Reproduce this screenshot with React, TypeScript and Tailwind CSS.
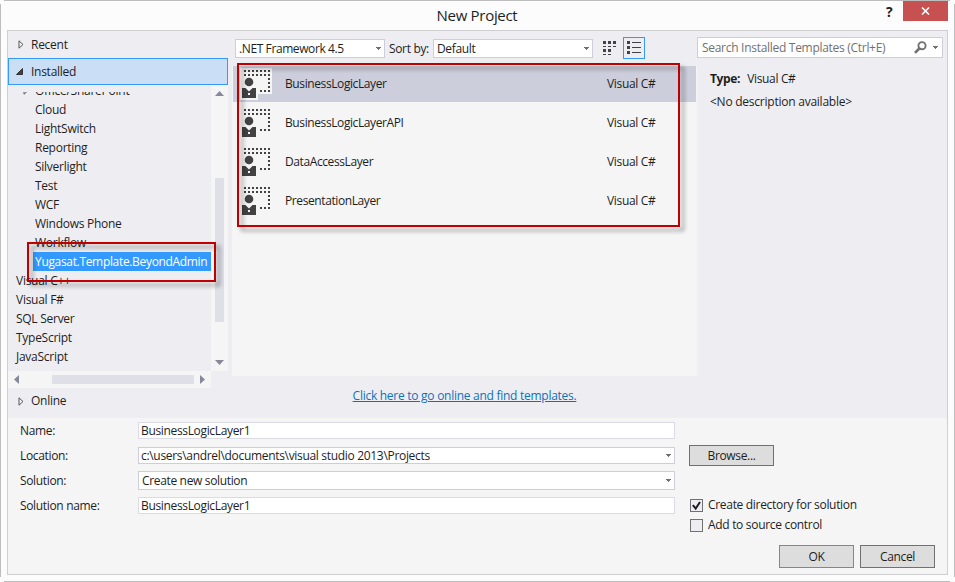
import React from "react";

const treeItems = ["Cloud", "LightSwitch", "Reporting", "Silverlight", "Test", "WCF", "Windows Phone", "Workflow"];
const languages = ["Visual C++", "Visual F#", "SQL Server", "TypeScript", "JavaScript"];
const templates = ["BusinessLogicLayer", "BusinessLogicLayerAPI", "DataAccessLayer", "PresentationLayer"];

function Caret({ className = "" }: { className?: string }) {
  return (
    <svg width="6" height="3" viewBox="0 0 6 3" className={className} shapeRendering="crispEdges">
      <path d="M0 0h6L3 3z" fill="#717171" />
    </svg>
  );
}

function Collapsed() {
  return (
    <svg width="6" height="9" viewBox="0 0 6 9">
      <path d="M1 .8v7.4L5 4.5z" fill="#f4f4f4" stroke="#555" strokeWidth="1" />
    </svg>
  );
}

function Select({ value, className = "" }: { value: string; className?: string }) {
  return (
    <div className={`flex items-center justify-between border border-[#cccedb] bg-white pr-[3px] ${className}`}>
      <span>{value}</span>
      <Caret />
    </div>
  );
}

const dots = [
  ...[0, 4].flatMap((y) => [2, 6, 10, 14, 18, 22, 26].map((x) => [x, y])),
  [26, 8], [26, 12], [26, 16], [26, 20], [22, 20], [18, 20],
];

function TemplateIcon({ selected }: { selected: boolean }) {
  return (
    <svg width="32" height="32" viewBox="-2 -2 32 32" shapeRendering="crispEdges">
      {selected && <path d="M-2-2H30V24H16V30H-2z" fill="#f5f5f5" />}
      {dots.map(([x, y]) => (
        <rect key={`${x}-${y}`} x={x} y={y} width="2" height="2" fill="#424242" />
      ))}
      <circle cx="7" cy="12" r="5.6" fill="#f5f5f5" />
      <circle cx="7" cy="12" r="4.3" fill="#424242" shapeRendering="auto" />
      <path d="M0 18h3.5L7 21.5 10.500 18H14v10H0z" fill="#424242" shapeRendering="auto" />
      <rect x="6" y="23" width="2" height="2" fill="#f5f5f5" />
    </svg>
  );
}

function Field({ label, children }: { label: string; children: React.ReactNode }) {
  return (
    <div className="flex h-[25px] items-center">
      <span className="w-[118px]">{label}</span>
      {children}
    </div>
  );
}

function Check({ label, checked }: { label: string; checked: boolean }) {
  return (
    <div className="flex h-5 items-center">
      <span className="mr-[5px] flex h-[13px] w-[13px] items-center justify-center border border-[#717171] bg-[#eeeef2]">
        {checked && (
          <svg width="11" height="11" viewBox="0 0 11 11">
            <path d="M1.800 5.200L4.700 8.500 9 2" fill="none" stroke="#1e1e1e" strokeWidth="2" />
          </svg>
        )}
      </span>
      <span className="tracking-[-0.31px]">{label}</span>
    </div>
  );
}

export default function App() {
  return (
    <div className="relative flex h-[582px] w-[955px] flex-col overflow-hidden bg-[#fcfcfc] font-['Open_Sans','Noto_Sans',sans-serif] text-[12px] leading-[18px] tracking-[-0.34px] whitespace-nowrap text-[#1e1e1e]">
      <div className="absolute top-0 left-1 h-px w-[946px] bg-[#bdbdbd]" />
      <div className="absolute bottom-0 left-1 h-px w-[946px] bg-[#bdbdbd]" />
      <div className="absolute top-1 left-0 h-[573px] w-px bg-[#bdbdbd]" />
      <div className="absolute top-1 right-0 h-[573px] w-px bg-[#bdbdbd]" />

      <header className="flex h-[30px] shrink-0 items-start pt-px pl-[7px]">
        <h1 className="w-[872px] pt-[3px] pl-[68px] text-center text-[15px] leading-[22px] tracking-[-0.3px]">New Project</h1>
        <span className="w-6 pl-[7px] text-[14px] leading-[22px] font-bold">?</span>
        <button className="flex h-5 w-[45px] items-center justify-center bg-[#c75050]">
          <svg width="9" height="8" viewBox="0 0 9 8"><path d="M1 .5l7 7M8 .5l-7 7" stroke="#fff" strokeWidth="1.600" /></svg>
        </button>
      </header>

      <main className="ml-[7px] flex h-[545px] w-[941px] flex-col border border-[#cfcfd1] bg-[#f5f5f5]">
        <section className="flex h-[387px] shrink-0 bg-[#eeeef2]">
          <nav className="flex w-[220px] flex-col tracking-[-0.27px]">
            <div className="flex h-[27px] items-center gap-[7px] pl-[10px]"><Collapsed /><span>Recent</span></div>
            <div className="flex h-[27px] shrink-0 items-center border border-[#3399ff] bg-[#cadef5] pl-[7px]">
              <svg width="7" height="7" viewBox="0 0 7 7" className="mr-2"><path d="M6.500 .5v6H.5z" fill="#424242" stroke="#1e1e1e" strokeWidth=".8" /></svg>
              <span>Installed</span>
            </div>
            <div className="flex h-[286px] shrink-0">
              <div className="w-[203px] pt-[7px]">
                <div className="h-[279px] overflow-hidden">
                  <div className="-mt-[11px]">
                    <div className="flex h-[19px] items-center gap-[5px] pl-[15px]"><Collapsed /><span className="ml-px tracking-[-0.25px]">Office/SharePoint</span></div>
                    {treeItems.map((t) => <div key={t} className="flex h-[19px] items-center pl-[27px]">{t}</div>)}
                    <div className="ml-[25px] flex h-[19px] items-center bg-[#3399ff] pl-[2px] tracking-[-0.33px] text-white">Yugasat.Template.BeyondAdmin</div>
                    {languages.map((t) => <div key={t} className="flex h-[19px] items-center pl-2">{t}</div>)}
                  </div>
                </div>
              </div>
              <div className="flex w-[17px] flex-col items-center bg-[#f5f5f5] pt-[6px] pb-[6px]">
                <svg width="9" height="5" viewBox="0 0 9 5"><path d="M0 5h9L4.500 0z" fill="#868999" /></svg>
                <div className="mt-[82px] h-[144px] w-[9px] bg-[#dfdfe8]" />
                <svg width="9" height="5" viewBox="0 0 9 5" className="mt-auto"><path d="M0 0h9L4.500 5z" fill="#868999" /></svg>
              </div>
            </div>
            <div className="flex h-[17px] w-[203px] shrink-0 items-center bg-[#f5f5f5] pl-[6px]">
              <svg width="5" height="9" viewBox="0 0 5 9"><path d="M5 0v9L0 4.500z" fill="#868999" /></svg>
              <div className="ml-[33px] h-[9px] w-[142px] bg-[#dfdfe8]" />
              <svg width="5" height="9" viewBox="0 0 5 9" className="ml-[6px]"><path d="M0 0v9L5 4.500z" fill="#868999" /></svg>
            </div>
            <div className="flex h-[26px] items-center gap-[7px] pl-[10px]"><Collapsed /><span>Online</span></div>
          </nav>

          <div className="ml-1 flex w-[465px] flex-col">
            <div className="flex h-[35px] items-center pl-[3px]">
              <Select value=".NET Framework 4.5" className="h-[19px] w-[150px] pl-[3px] tracking-[-0.4px]" />
              <span className="w-[48px] pl-1">Sort by:</span>
              <Select value="Default" className="h-[19px] w-[160px] pl-[3px]" />
              <svg width="14" height="15" viewBox="0 0 14 15" className="ml-[10px]" shapeRendering="crispEdges" fill="#424242">
                <path d="M0 0h3v3H0zM5 0h3v3H5zM10 0h3v3h-3zM0 5h3v1H0zM5 5h3v1H5zM10 5h3v1h-3zM0 8h3v3H0zM5 8h3v3H5zM0 13h3v1H0zM5 13h3v1H5z" />
              </svg>
              <div className="mb-px ml-[6px] flex h-[22px] w-[22px] items-center justify-center border border-[#3399ff]">
                <svg width="14" height="14" viewBox="0 0 14 14" shapeRendering="crispEdges" fill="#424242">
                  <path d="M0 0h3v3H0zM0 5h3v3H0zM0 10h3v3H0zM5 1h9v1H5zM5 6h9v1H5zM5 11h9v1H5z" />
                </svg>
              </div>
            </div>
            <div className="h-[310px] bg-[#f5f5f5] px-px">
              {templates.map((t, i) => (
                <div key={t} className="h-[39px]">
                  <div className={`flex h-9 items-center pl-[7px] ${i === 0 ? "bg-[#cccedb]" : ""}`}>
                    <TemplateIcon selected={i === 0} />
                    <span className="w-[335px] pl-[13px] tracking-[-0.4px]">{t}</span>
                    <span>Visual C#</span>
                  </div>
                </div>
              ))}
            </div>
            <a className="mt-[11px] text-center tracking-[-0.27px] text-[#0e70c0] underline">Click here to go online and find templates.</a>
          </div>

          <aside className="flex w-[250px] flex-col pt-[6px]">
            <div className="flex h-[21px] w-[246px] items-center border border-[#cccedb] bg-white pr-[4px] pl-[4px] tracking-[-0.29px] text-[#717171]">
              <span className="grow">Search Installed Templates (Ctrl+E)</span>
              <svg width="13" height="13" viewBox="0 0 13 13" className="mr-[5px]" fill="none" stroke="#717171"><circle cx="8" cy="4.700" r="3.600" strokeWidth="1.900" /><path d="M5.300 7.500L1 11.800" strokeWidth="2.600" /></svg>
              <Caret />
            </div>
            <div className="mt-[12px] flex h-[18px] gap-[7px] pl-[13px]"><b>Type:</b><span>Visual C#</span></div>
            <div className="mt-[5px] pl-[13px] tracking-[-0.24px]">&lt;No description available&gt;</div>
          </aside>
        </section>

        <section className="flex h-[100px]">
          <div className="w-[669px] pl-3">
            <Field label="Name:"><div className="flex h-[17px] w-[537px] items-center border border-[#dadbe5] bg-white pl-[2px]">BusinessLogicLayer1</div></Field>
            <Field label="Location:"><Select value="c:\users\andrel\documents\visual studio 2013\Projects" className="h-[17px] w-[537px] pl-[2px] tracking-[-0.315px]" /></Field>
            <Field label="Solution:"><Select value="Create new solution" className="h-[19px] w-[537px] pl-[3px]" /></Field>
            <Field label="Solution name:"><div className="flex h-[17px] w-[537px] items-center border border-[#dadbe5] bg-white pl-[2px]">BusinessLogicLayer1</div></Field>
          </div>
          <div className="pt-[27px] pl-3">
            <button className="mb-[29px] block h-[21px] w-[85px] border border-[#717171] bg-[#dddddd] leading-[19px]">Browse...</button>
            <div className="pl-px">
              <Check label="Create directory for solution" checked />
              <Check label="Add to source control" checked={false} />
            </div>
          </div>
        </section>
        <footer className="mt-[27px] flex gap-[6px] pl-[771px]">
          <button className="h-[23px] w-[75px] border border-[#3399ff] bg-[#dddddd]">OK</button>
          <button className="h-[23px] w-[75px] border border-[#717171] bg-[#dddddd]">Cancel</button>
        </footer>
      </main>

      <div className="absolute top-[63px] left-[237px] h-[164px] w-[443px] border-2 border-[#c00000] [filter:drop-shadow(4px_4px_2px_rgba(0,0,0,0.4))]" />
      <div className="absolute top-[242px] left-[27px] h-10 w-[189px] border-2 border-[#c00000] [filter:drop-shadow(4px_4px_2px_rgba(0,0,0,0.4))]" />
    </div>
  );
}
